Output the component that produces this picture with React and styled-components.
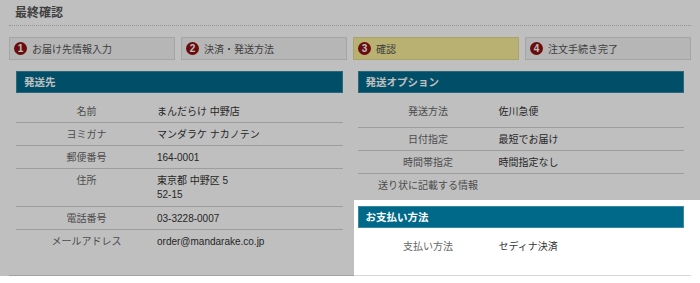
import React from "react";
import styled, { createGlobalStyle } from "styled-components";

const GlobalStyle = createGlobalStyle`
    html, body {
        margin: 0;
        padding: 0;
        background: #fff;
        overflow: hidden;
    }
    body {
        font-family: "Liberation Sans", "Noto Sans CJK JP", sans-serif;
        font-size: 10px;
        color: #333;
    }
`;

const Page = styled.div`
    padding: 5px 9px 0;
`;

const Title = styled.h2`
    margin: 0;
    padding: 0 0 4px 6px;
    font-size: 12px;
    line-height: 16px;
    font-weight: bold;
    color: #555;
    border-bottom: 1px dotted #c4c4c4;
`;

const Steps = styled.ol`
    display: grid;
    grid-template-columns: repeat(4, 1fr);
    gap: 6px;
    margin: 11px 0 0;
    padding: 0;
    list-style: none;
`;

const Step = styled.li`
    display: flex;
    align-items: center;
    gap: 5px;
    height: 23px;
    box-sizing: border-box;
    padding-left: 4px;
    background: ${(p) => (p.$current ? "#f6ec98" : "#f3f3f3")};
    border: 1px solid ${(p) => (p.$current ? "#e2d98c" : "#dcdcdc")};
    color: #555;
`;

const Badge = styled.span`
    width: 13px;
    height: 13px;
    border-radius: 50%;
    background: #8e1010;
    color: #fff;
    font-weight: bold;
    font-size: 10px;
    line-height: 13px;
    text-align: center;
`;

const Columns = styled.div`
    display: grid;
    grid-template-columns: 1fr 1fr;
    gap: 15px;
    margin-top: 11px;
    padding: 0 7px 18px;
    border-bottom: 1px solid #d8d8d8;
`;

const Panel = styled.section`
    position: relative;
    margin-top: ${(p) => p.$offset || 0}px;
`;

const Heading = styled.h3`
    margin: 0;
    height: 22px;
    box-sizing: border-box;
    padding-left: 7px;
    background: #00698a;
    border: 1px solid #3a88a2;
    color: #fff;
    font-size: 10.5px;
    line-height: 20px;
    font-weight: bold;
`;

const Table = styled.dl`
    margin: 7px 0 0;
`;

const Row = styled.div`
    display: grid;
    grid-template-columns: 141px 1fr;
    padding: 5px 0 ${(p) => (p.$tall ? 9 : 4)}px;
    line-height: 13px;
    border-bottom: ${(p) => (p.$last ? "none" : "1px solid #d2d2d2")};
`;

const Label = styled.dt`
    text-align: center;
    color: #666;
`;

const Value = styled.dd`
    margin: 0;
    color: #333;
    line-height: ${(p) => (p.$multi ? 14 : 13)}px;
`;

const Spotlight = styled.div`
    position: absolute;
    top: -6px;
    left: -4px;
    right: -40px;
    bottom: -40px;
    z-index: 10;
    pointer-events: none;
    box-shadow: 0 0 0 3000px rgba(0, 0, 0, 0.25);
`;

const steps = ["お届け先情報入力", "決済・発送方法", "確認", "注文手続き完了"];

const address = [
    { label: "名前", value: "まんだらけ 中野店" },
    { label: "ヨミガナ", value: "マンダラケ ナカノテン" },
    { label: "郵便番号", value: "164-0001" },
    { label: "住所", value: ["東京都 中野区 5", "52-15"] },
    { label: "電話番号", value: "03-3228-0007" },
    { label: "メールアドレス", value: "order@mandarake.co.jp" },
];

const options = [
    { label: "発送方法", value: "佐川急便" },
    { label: "日付指定", value: "最短でお届け" },
    { label: "時間帯指定", value: "時間指定なし" },
    { label: "送り状に記載する情報", value: "" },
];

function InfoRows({ rows, tallFirst }) {
    return (
        <Table>
            {rows.map((r, i) => (
                <Row key={r.label} $last={i === rows.length - 1} $tall={tallFirst && i === 0}>
                    <Label>{r.label}</Label>
                    <Value $multi={Array.isArray(r.value)}>
                        {Array.isArray(r.value)
                            ? r.value.map((line) => <div key={line}>{line}</div>)
                            : r.value}
                    </Value>
                </Row>
            ))}
        </Table>
    );
}

export default function App() {
    return (
        <>
            <GlobalStyle />
            <Page>
                <Title>最終確認</Title>
                <Steps>
                    {steps.map((s, i) => (
                        <Step key={s} $current={i === 2}>
                            <Badge>{i + 1}</Badge>
                            {s}
                        </Step>
                    ))}
                </Steps>
                <Columns>
                    <Panel>
                        <Heading>発送先</Heading>
                        <InfoRows rows={address} />
                    </Panel>
                    <div>
                        <Panel>
                            <Heading>発送オプション</Heading>
                            <InfoRows rows={options} tallFirst />
                        </Panel>
                        <Panel $offset={10}>
                            <Spotlight />
                            <Heading>お支払い方法</Heading>
                            <InfoRows rows={[{ label: "支払い方法", value: "セディナ決済" }]} />
                        </Panel>
                    </div>
                </Columns>
            </Page>
        </>
    );
}
